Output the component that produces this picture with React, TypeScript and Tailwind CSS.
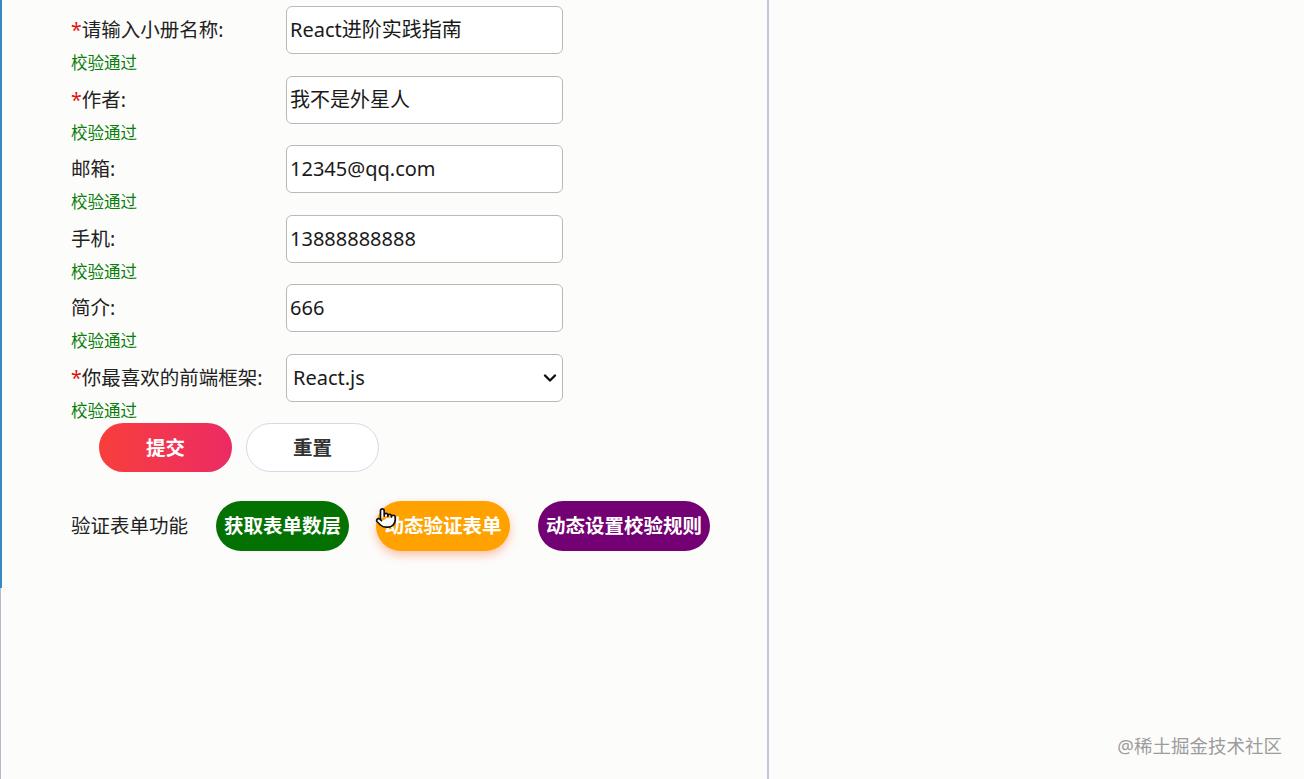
import React from "react";
import { Pointer } from "lucide-react";

const font = { fontFamily: '"Noto Sans", "Noto Sans CJK SC", sans-serif' };

const fields = [
  { label: "请输入小册名称:", value: "React进阶实践指南", required: true },
  { label: "作者:", value: "我不是外星人", required: true },
  { label: "邮箱:", value: "12345@qq.com", required: false },
  { label: "手机:", value: "13888888888", required: false },
  { label: "简介:", value: "666", required: false },
];

const Label = ({ text, required }: { text: string; required: boolean }) => (
  <div className="w-[215px] text-[19.5px] text-[#222]">
    {required && <span className="text-[#e01010]">*</span>}
    {text}
  </div>
);

const Status = () => (
  <div className="h-[21.5px] leading-[18px] text-[16.5px] text-[#0a7d0a]">校验通过</div>
);

export default function App() {
  return (
    <div className="relative h-[779px] w-[1304px] overflow-hidden bg-[#fcfcfb]" style={font}>
      <div className="absolute left-0 top-0 h-[588px] w-[2px] bg-[#3b86c4]" />
      <div className="absolute left-0 top-[588px] h-[191px] w-[1px] bg-[#b8b8c8]" />
      <div className="flex h-full">
        <div className="h-full w-[769px] border-r-2 border-[#c4c6d6] pl-[71px] pt-[6px]">
          {fields.map((f) => (
            <div key={f.label}>
              <div className="flex h-[48px] items-center">
                <Label text={f.label} required={f.required} />
                <div className="flex h-[48px] w-[277px] items-center rounded-md border border-[#b9b9b9] bg-white pl-[3px] text-[20px] text-[#1a1a1a]">
                  {f.value}
                </div>
              </div>
              <Status />
            </div>
          ))}
          <div>
            <div className="flex h-[48px] items-center">
              <Label text="你最喜欢的前端框架:" required />
              <div className="flex h-[48px] w-[277px] items-center justify-between rounded-md border border-[#b9b9b9] bg-white pl-[6px] pr-[5px] text-[20px] text-[#1a1a1a]">
                <span>React.js</span>
                <svg width="14" height="14" viewBox="0 0 14 14">
                  <path d="M2 4.5 L7 9.5 L12 4.5" fill="none" stroke="#111" strokeWidth="2.4" strokeLinecap="round" strokeLinejoin="round" />
                </svg>
              </div>
            </div>
            <Status />
          </div>
          <div className="ml-[28px] flex gap-[14px]">
            <button className="h-[49px] w-[133px] rounded-full bg-gradient-to-r from-[#f83e3a] to-[#ec2a63] text-[19.5px] font-bold text-white">
              提交
            </button>
            <button className="h-[49px] w-[133px] rounded-full border border-[#d6d9e4] bg-white text-[19.5px] font-bold text-[#333]">
              重置
            </button>
          </div>
          <div className="mt-[29px] flex items-center">
            <span className="w-[145px] text-[19.5px] text-[#222]">验证表单功能</span>
            <button className="h-[50px] w-[133px] rounded-full bg-[#037203] text-[19.5px] font-bold text-white">
              获取表单数层
            </button>
            <div className="relative ml-[27px]">
              <button className="h-[50px] w-[134px] rounded-full bg-[#ffa200] text-[19.5px] font-bold text-white shadow-[0_4px_10px_rgba(255,120,60,0.45)]">
                动态验证表单
              </button>
              <Pointer
                className="absolute left-[-1px] top-[6px] h-[22px] w-[22px]"
                fill="#fff"
                stroke="#111"
                strokeWidth={1.8}
              />
            </div>
            <button className="ml-[28px] h-[50px] w-[172px] rounded-full bg-[#730173] text-[19.5px] font-bold text-white">
              动态设置校验规则
            </button>
          </div>
        </div>
        <div className="flex-1" />
      </div>
      <div className="absolute bottom-[19px] right-[22px] text-[18.5px] text-[#9c9c9c]">@稀土掘金技术社区</div>
    </div>
  );
}
